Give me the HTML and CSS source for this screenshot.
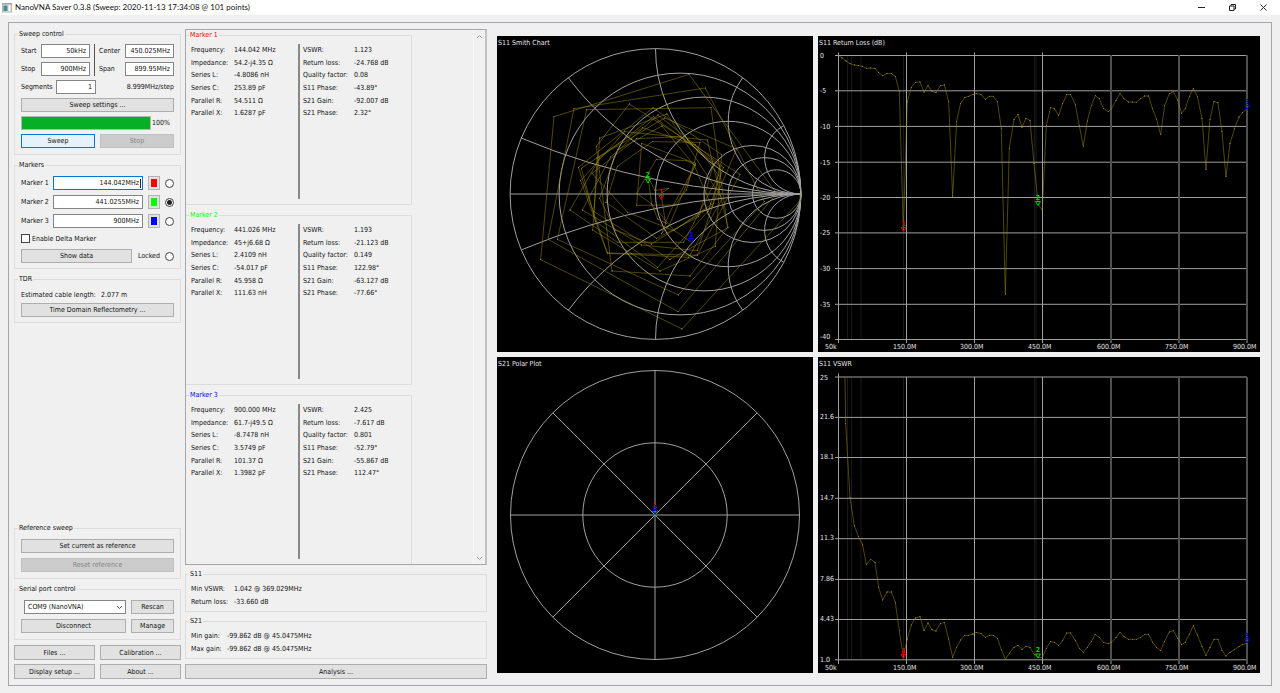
FILE: index.html
```html
<!DOCTYPE html>
<html lang="en">
<head>
<meta charset="utf-8">
<title>NanoVNA Saver 0.3.8</title>
<link rel="stylesheet" href="styles.css">
</head>
<body>
<header class="titlebar">
  <svg class="app-icon" viewBox="0 0 10 10" aria-hidden="true"><defs><linearGradient id="ico" x2="1" y2="1"><stop stop-color="#4a7a9a"/><stop offset="1" stop-color="#3f9a70"/></linearGradient></defs><rect x=".5" y=".5" width="9" height="8.5" fill="#e4e4e4" stroke="#b4b4b4"/><path d="M.5 1h9" stroke="#8c98a0"/><rect x="1.5" y="2.5" width="4" height="5.5" fill="url(#ico)"/><path d="M7.5 3v5" stroke="#fff"/></svg>
  <h1 class="title">NanoVNA Saver 0.3.8 (Sweep: 2020-11-13 17:34:08 @ 101 points)</h1>
  <div class="window-buttons">
    <button class="wbtn" aria-label="Minimize"><svg viewBox="0 0 9 9"><path d="M1 4.5h7"/></svg></button>
    <button class="wbtn" aria-label="Restore"><svg viewBox="0 0 9 9"><path d="M1.500 3h4.500v4.500h-4.500zM3 3V1.500h4.500V6H6"/></svg></button>
    <button class="wbtn" aria-label="Close"><svg viewBox="0 0 9 9"><path d="M1.500 1.500l6 6M7.500 1.500l-6 6"/></svg></button>
  </div>
</header>
<main class="frame">
  <section class="controls">
    <fieldset class="group">
      <legend>Sweep control</legend>
      <div class="rows sweep">
        <div class="range">
          <label for="start">Start</label><input class="field" id="start" value="50kHz">
          <span class="divider"></span>
          <label for="center">Center</label><input class="field" id="center" value="450.025MHz">
          <label for="stop">Stop</label><input class="field" id="stop" value="900MHz">
          <label for="span">Span</label><input class="field" id="span" value="899.95MHz">
        </div>
        <div class="row"><label class="seg-label" for="segments">Segments</label><input class="field seg" id="segments" value="1"><span class="push">8.999MHz/step</span></div>
        <button class="btn">Sweep settings ...</button>
        <div class="row"><div class="progress" role="progressbar" aria-label="Sweep progress" aria-valuenow="100"></div><span class="percent">100%</span></div>
        <div class="pair"><button class="btn active">Sweep</button><button class="btn" disabled>Stop</button></div>
      </div>
    </fieldset>
    <fieldset class="group">
      <legend>Markers</legend>
      <div class="rows markers">
        <div class="mrow"><label for="m1">Marker 1</label><input class="field focused" id="m1" value="144.042MHz"><button class="swatch" aria-label="Marker 1 colour"><i class="chip red"></i></button><input class="radio" type="radio" name="m" aria-label="Select marker 1"></div>
        <div class="mrow"><label for="m2">Marker 2</label><input class="field" id="m2" value="441.0255MHz"><button class="swatch" aria-label="Marker 2 colour"><i class="chip green"></i></button><input class="radio" type="radio" name="m" checked aria-label="Select marker 2"></div>
        <div class="mrow"><label for="m3">Marker 3</label><input class="field" id="m3" value="900MHz"><button class="swatch" aria-label="Marker 3 colour"><i class="chip blue"></i></button><input class="radio" type="radio" name="m" aria-label="Select marker 3"></div>
        <label class="check"><input class="checkbox" type="checkbox">Enable Delta Marker</label>
        <div class="row"><button class="btn show">Show data</button><label class="locked">Locked<input class="radio" type="radio" name="m"></label></div>
      </div>
    </fieldset>
    <fieldset class="group">
      <legend>TDR</legend>
      <div class="rows tdr">
        <p class="cable"><span>Estimated cable length:</span><span>2.077 m</span></p>
        <button class="btn">Time Domain Reflectometry ...</button>
      </div>
    </fieldset>
    <fieldset class="group bottom">
      <legend>Reference sweep</legend>
      <div class="rows loose">
        <button class="btn">Set current as reference</button>
        <button class="btn" disabled>Reset reference</button>
      </div>
    </fieldset>
    <fieldset class="group">
      <legend>Serial port control</legend>
      <div class="rows loose serial">
        <div class="combo"><select class="select" aria-label="Serial port"><option>COM9 (NanoVNA)</option></select><svg viewBox="0 0 7 5"><path d="M1 1l2.500 2.500L6 1"/></svg></div>
        <button class="btn">Rescan</button>
        <button class="btn">Disconnect</button>
        <button class="btn">Manage</button>
      </div>
    </fieldset>
    <div class="pair menu">
      <button class="btn">Files ...</button><button class="btn">Calibration ...</button>
      <button class="btn">Display setup ...</button><button class="btn">About ...</button>
    </div>
  </section>

  <section class="readouts">
    <div class="scroll">
      <div class="marker-list">
        <fieldset class="group marker">
          <legend class="t-red">Marker 1</legend>
          <div class="halves">
            <dl class="values"><dt>Frequency:</dt><dd>144.042 MHz</dd><dt>Impedance:</dt><dd>54.2-j4.35 Ω</dd><dt>Series L:</dt><dd>-4.8086 nH</dd><dt>Series C:</dt><dd>253.89 pF</dd><dt>Parallel R:</dt><dd>54.511 Ω</dd><dt>Parallel X:</dt><dd>1.6287 pF</dd></dl>
            <dl class="values right"><dt>VSWR:</dt><dd>1.123</dd><dt>Return loss:</dt><dd>-24.768 dB</dd><dt>Quality factor:</dt><dd>0.08</dd><dt>S11 Phase:</dt><dd>-43.89°</dd><dt>S21 Gain:</dt><dd>-92.007 dB</dd><dt>S21 Phase:</dt><dd>2.32°</dd></dl>
          </div>
        </fieldset>
        <fieldset class="group marker">
          <legend class="t-green">Marker 2</legend>
          <div class="halves">
            <dl class="values"><dt>Frequency:</dt><dd>441.026 MHz</dd><dt>Impedance:</dt><dd>45+j6.68 Ω</dd><dt>Series L:</dt><dd>2.4109 nH</dd><dt>Series C:</dt><dd>-54.017 pF</dd><dt>Parallel R:</dt><dd>45.958 Ω</dd><dt>Parallel X:</dt><dd>111.63 nH</dd></dl>
            <dl class="values right"><dt>VSWR:</dt><dd>1.193</dd><dt>Return loss:</dt><dd>-21.123 dB</dd><dt>Quality factor:</dt><dd>0.149</dd><dt>S11 Phase:</dt><dd>122.98°</dd><dt>S21 Gain:</dt><dd>-63.127 dB</dd><dt>S21 Phase:</dt><dd>-77.66°</dd></dl>
          </div>
        </fieldset>
        <fieldset class="group marker">
          <legend class="t-blue">Marker 3</legend>
          <div class="halves">
            <dl class="values"><dt>Frequency:</dt><dd>900.000 MHz</dd><dt>Impedance:</dt><dd>61.7-j49.5 Ω</dd><dt>Series L:</dt><dd>-8.7478 nH</dd><dt>Series C:</dt><dd>3.5749 pF</dd><dt>Parallel R:</dt><dd>101.37 Ω</dd><dt>Parallel X:</dt><dd>1.3982 pF</dd></dl>
            <dl class="values right"><dt>VSWR:</dt><dd>2.425</dd><dt>Return loss:</dt><dd>-7.617 dB</dd><dt>Quality factor:</dt><dd>0.801</dd><dt>S11 Phase:</dt><dd>-52.79°</dd><dt>S21 Gain:</dt><dd>-55.867 dB</dd><dt>S21 Phase:</dt><dd>112.47°</dd></dl>
          </div>
        </fieldset>
      </div>
      <div class="scrollbar"><svg viewBox="0 0 7 5"><path d="M1 4l2.500-2.500L6 4"/></svg><svg viewBox="0 0 7 5"><path d="M1 1l2.500 2.500L6 1"/></svg></div>
    </div>
    <fieldset class="group summary">
      <legend>S11</legend>
      <dl class="values"><dt>Min VSWR:</dt><dd>1.042 @ 369.029MHz</dd><dt>Return loss:</dt><dd>-33.660 dB</dd></dl>
    </fieldset>
    <fieldset class="group summary">
      <legend>S21</legend>
      <dl class="values gain"><dt>Min gain:</dt><dd>-99.862 dB @ 45.0475MHz</dd><dt>Max gain:</dt><dd>-99.862 dB @ 45.0475MHz</dd></dl>
    </fieldset>
    <button class="btn analysis">Analysis ...</button>
  </section>

  <section class="charts">
    <svg class="chart" viewBox="497 36 316 316" role="img" aria-label="S11 Smith Chart">
      <defs>
        <marker id="dot" markerUnits="userSpaceOnUse" markerWidth="4" markerHeight="4" refX="2" refY="2"><rect width="4" height="4" fill="#8c7812"/></marker>
      </defs>
      <g class="grid">
        <circle cx="655.500" cy="194" r="145.400"/>
        <circle cx="680" cy="194" r="120.900"/>
        <circle cx="704" cy="194" r="96.900"/>
        <circle cx="728.200" cy="194" r="72.700"/>
        <circle cx="752.400" cy="194" r="48.500"/>
        <circle cx="764.500" cy="194" r="36.400"/>
        <circle cx="776.700" cy="194" r="24.200"/>
        <path d="M510 194H801"/>
        <path d="M655.500 48.600A145.400 145.400 0 0 0 800.900 194M742.700 77.700A72.700 72.700 0 0 0 800.900 194M783.800 125.600A36.350 36.350 0 0 0 800.900 194M568.300 77.700A290.800 290.800 0 0 0 800.900 194M521.300 138.100A727 727 0 0 0 800.900 194"/>
        <path d="M655.500 339.400A145.400 145.400 0 0 1 800.900 194M742.700 310.300A72.700 72.700 0 0 1 800.900 194M783.800 262.400A36.350 36.350 0 0 1 800.900 194M568.300 310.300A290.800 290.800 0 0 1 800.900 194M521.300 249.900A727 727 0 0 1 800.900 194"/>
      </g>
      <g class="trace" transform="translate(495 30) scale(.3333)">
        <polyline points="915,492 915,512 561,897 137,689 177,260 582,133 845,490 549,845 159,628 237,236 631,174 808,515 550,795 187,628 275,239 648,233 698,593 585,738 351,723 304,349 403,222 735,433 607,676 337,669 250,412 474,234 680,374 661,649 495,723 293,600 314,324 516,252 682,506 581,682 337,670 257,452 389,305 637,330 699,593 525,688 297,545 306,384 509,264 725,357 655,520 607,662 440,645 262,540 347,381 489,255 685,412 640,543 488,712 302,574 259,415 443,293 601,345 671,436 566,637 367,637 225,540 314,384 475,260 674,408 653,528 470,642 361,600 314,505 368,360 501,288 598,407 648,524 537,602 398,547 291,430 425,326 556,320 656,400 611,560 485,625 333,517 367,409 472,335 615,337 574,480 540,525 425,526 440,340 602,400 521,590 500,610 513,580 488,567 470,522 425,490 484,388 574,392 602,405 535,525 511,578 498,490 521,475 480,482 459,440 470,522 538,602 588,636"/>
      </g>
      <g class="m-green"><path d="M645.500 179h5l-2.500 4z"/><text x="648" y="177">2</text></g>
      <g class="m-red"><path d="M658.800 195.500h5l-2.500 4z"/><text x="661.300" y="194">1</text></g>
      <g class="m-blue"><path d="M688.800 238.500h5l-2.500 4z"/><text x="691.300" y="237">3</text></g>
      <text class="lbl" x="498" y="45">S11 Smith Chart</text>
    </svg>

    <svg class="chart" viewBox="818 36 442 316" role="img" aria-label="S11 Return Loss">
      <path class="bands" d="M847.500 55v284M851.500 55v284M861 55v284M903.500 55v284M1034.500 55v284M1036 55v284"/>
      <path class="grid" d="M835 55.500H1247M835 90.800H1247M835 126.400H1247M835 162.200H1247M835 197.500H1247M835 232.900H1247M835 268.600H1247M835 304.300H1247M835 339.500H1247M838.500 52.500V343M906.500 52.500V343M974.500 52.500V343M1042.500 52.500V343"/>
      <path class="grid wide" d="M1111 55V343M1179 55V343M1247 55V343"/>
      <g class="trace" transform="translate(815 30) scale(.3333)">
        <polyline points="70,76 81,84 93,93 105,101 118,105 130,107 143,109 154,115 167,114 180,115 191,128 203,137 216,131 229,131 241,139 253,184 265,600 277,215 289,172 301,157 315,156 327,186 339,167 351,184 363,188 376,167 388,165 401,215 413,500 425,274 437,220 449,203 461,199 474,193 485,191 498,193 511,208 523,199 535,199 547,214 559,295 571,793 583,355 597,268 609,254 621,292 633,265 645,271 657,400 670,524 682,541"/>
        <polyline transform="translate(675 0)" points="7,541 19,287 32,232 44,237 56,257 68,221 80,194 92,194 106,223 118,287 130,349 142,273 154,227 166,197 178,206 190,235 205,245 215,235 228,212 240,190 251,205 265,216 277,216 289,217 302,206 314,198 326,198 337,235 350,268 362,314 374,227 388,191 400,185 413,210 425,250 436,235 448,200 460,175 472,199 486,265 498,418 510,268 522,215 534,218 546,305 558,439 570,341 584,295 597,261 608,248 621,236"/>
      </g>
      <g class="m-red"><path d="M901 227.500h5l-2.500 4z"/><text x="903.500" y="226">1</text></g>
      <g class="m-green"><path d="M1035.500 201.500h5l-2.500 4z"/><text x="1038" y="200">2</text></g>
      <g class="m-blue"><path d="M1244.500 105.500h5l-2.500 4z"/><text x="1247" y="104">3</text></g>
      <g class="lbl">
        <text x="819" y="45">S11 Return Loss (dB)</text>
        <text x="820" y="58">0</text><text x="820" y="93">-5</text><text x="820" y="129">-10</text><text x="820" y="165">-15</text><text x="820" y="200">-20</text><text x="820" y="235">-25</text><text x="820" y="271">-30</text><text x="820" y="307">-35</text><text x="820" y="339">-40</text>
        <text x="825" y="349">50k</text><text x="893" y="349">150.0M</text><text x="960" y="349">300.0M</text><text x="1028" y="349">450.0M</text><text x="1097" y="349">600.0M</text><text x="1165" y="349">750.0M</text><text x="1233" y="349">900.0M</text>
      </g>
    </svg>

    <svg class="chart" viewBox="497 357 316 316" role="img" aria-label="S21 Polar Plot">
      <g class="grid">
        <circle cx="655" cy="515" r="144.500"/><circle cx="655" cy="515" r="72.200"/>
        <path d="M510.500 515H799.500M655 370.500V659.500M552.800 412.800L757.200 617.200M757.200 412.800L552.800 617.200"/>
      </g>
      <g class="m-red"><text x="655" y="508">1</text></g>
      <g class="m-green"><path d="M652.500 511.500h5l-2.500 4z"/></g>
      <g class="m-blue"><path d="M652.500 510.500h5l-2.500 4z"/><text x="655" y="510">3</text></g>
      <text class="lbl" x="498" y="366">S21 Polar Plot</text>
    </svg>

    <svg class="chart" viewBox="818 357 442 316" role="img" aria-label="S11 VSWR">
      <path class="bands" d="M847.500 377v282M851.500 377v282M861 377v282M903.500 377v282M1034.500 377v282M1036 377v282"/>
      <path class="grid" d="M835 377H1247M835 417.400H1247M835 457.500H1247M835 498.300H1247M835 538.700H1247M835 579.400H1247M835 619.500H1247M835 659.800H1247M838.500 373.500V664M906.500 377V664M974.500 377V664M1042.500 377V664"/>
      <path class="grid wide" d="M1111 377V664M1179 377V664M1247 377V664"/>
      <g class="trace" transform="translate(815 355) scale(.3333)">
        <polyline points="90,66 92,205 105,427 118,513 130,544 143,570 154,629 167,613 180,622 191,697 203,735 216,711 229,711 241,742 253,827 265,906 277,852 289,810 301,789 315,785 327,827 339,804 351,824 363,828 376,806 388,802 401,852 413,907 425,877 437,855 449,842 461,841 474,837 485,832 498,836 511,847 523,841 535,841 547,850 559,883 571,913 583,895 597,877 609,871 621,883 633,874 645,877 658,899 670,907 682,908"/>
        <polyline transform="translate(675 0)" points="7,908 19,880 32,860 44,862 56,872 68,857 80,834 92,834 106,857 118,880 130,892 142,877 154,859 166,838 178,847 190,862 205,866 215,862 228,848 240,832 252,845 265,853 277,853 289,853 302,847 314,839 326,838 338,862 350,878 362,887 374,859 388,831 400,827 413,850 425,869 436,862 448,838 460,812 472,840 486,874 498,901 510,877 522,853 534,853 546,886 558,903 570,892 584,884 597,875 608,869 621,864"/>
      </g>
      <g class="m-red"><path d="M901 654.500h5l-2.500 4z"/><text x="903.500" y="653">1</text></g>
      <g class="m-green"><path d="M1035.500 654h5l-2.500 4z"/><text x="1038" y="652">2</text></g>
      <g class="m-blue"><path d="M1244.500 639h5l-2.500 4z"/><text x="1247" y="638">3</text></g>
      <g class="lbl">
        <text x="819" y="366">S11 VSWR</text>
        <text x="820" y="380">25</text><text x="820" y="419">21.6</text><text x="820" y="459">18.1</text><text x="820" y="500">14.7</text><text x="820" y="540">11.3</text><text x="820" y="581">7.86</text><text x="820" y="621">4.43</text><text x="820" y="662">1.0</text>
        <text x="825" y="670">50k</text><text x="893" y="670">150.0M</text><text x="960" y="670">300.0M</text><text x="1028" y="670">450.0M</text><text x="1097" y="670">600.0M</text><text x="1165" y="670">750.0M</text><text x="1233" y="670">900.0M</text>
      </g>
    </svg>
  </section>
</main>
</body>
</html>
```
FILE: styles.css
```css
* { box-sizing: border-box; }
body { margin: 0; height: 100vh; display: flex; flex-direction: column; background: #f0f0f0; color: #111; font: 7px/10px "DejaVu Sans Condensed", "Noto Sans", sans-serif; }
button, input, select { font: inherit; color: inherit; margin: 0; padding: 0; min-width: 0; }
dl, dd, p, h1 { margin: 0; }

.titlebar { display: flex; align-items: center; height: 15px; padding-left: 2px; background: #fff; flex: none; }
.app-icon { width: 10px; height: 10px; }
.title { margin-left: 3px; font: 8px/15px Lato, "Noto Sans", sans-serif; }
.window-buttons { margin-left: auto; display: flex; padding-right: 1px; }
.wbtn { width: 31px; height: 15px; border: 0; background: none; display: grid; place-items: center; }
.wbtn svg { width: 9px; height: 9px; fill: none; stroke: #222; stroke-width: 1; }

.frame { flex: 1; min-height: 0; display: flex; margin: 7px 8px; padding: 6px 11px 6px 5px; border: 1px solid #a4a6ae; }
.controls { width: 167px; flex: none; display: flex; flex-direction: column; gap: 5px; }
.readouts { width: 302px; flex: none; margin-left: 4px; display: flex; flex-direction: column; gap: 4px; }
.charts { flex: 1; min-width: 0; margin: 7px 0 6px 10px; display: grid; grid-template: 1fr 1fr / 316fr 442fr; gap: 5px; }

.group { margin: 0; padding: 0 6px; min-width: 0; border: 1px solid #dcdcdc; }
.group legend { margin-left: -3px; padding: 0 1px; height: 10px; line-height: 10px; }
.rows { display: grid; gap: 4px; padding: 5px 0; }
.rows.sweep { padding-bottom: 6px; }
.rows.tdr { gap: 3px; padding-top: 6px; }
.rows.loose { gap: 5px; padding: 6px 0; }
.row { display: flex; align-items: center; }
.push { margin-left: auto; }
.bottom { margin-top: auto; }

.range { display: grid; grid-template-columns: 20px 1fr 9px 26px 1fr; gap: 4px 0; align-items: center; }
.divider { grid-row: 1 / 3; grid-column: 3; justify-self: center; align-self: stretch; width: 1px; background: #555; }
.field { width: 100%; height: 14px; padding: 0 3px; border: 1px solid #858585; background: #fff; text-align: right; }
.focused { border-color: #0078d7; background: #fff linear-gradient(#222, #222) right 1px center / 1px 9px no-repeat; }
.seg-label { width: 35px; }
.seg { width: 40px; }
.btn { height: 14px; border: 1px solid #adadad; background: #e1e1e1; line-height: 10px; }
.btn:disabled { background: #ccc; border-color: #bfbfbf; color: #858585; }
.btn.active { border-color: #0078d7; background: #e5f1fb; }
.progress { flex: 1; height: 14px; border: 1px solid #b0b8b0; background: #06b025; }
.percent { width: 23px; padding-left: 1px; }
.pair { display: grid; grid-template-columns: 1fr 1fr; gap: 4px 5px; }
.menu .btn, .analysis { height: 15px; }
.analysis { margin-top: 1px; }

.rows.markers { gap: 5px; padding-top: 6px; }
.mrow { display: grid; grid-template-columns: 27px 1fr 12px 9px; column-gap: 5px; align-items: center; }
.mrow label { white-space: nowrap; }
.swatch { height: 14px; border: 1px solid #b4b4b4; background: #e1e1e1; display: grid; place-items: center; }
.chip { width: 6px; height: 8px; }
.red { background: #f00; } .green { background: #0f0; } .blue { background: #00f; }
.radio { appearance: none; width: 9px; height: 9px; border: 1px solid #444; border-radius: 50%; background: #fff; }
.radio:checked { background: radial-gradient(circle, #222 0 2px, #fff 3px); }
.check { display: flex; align-items: center; gap: 2px; height: 11px; }
.checkbox { appearance: none; width: 9px; height: 9px; border: 1px solid #444; background: #fff; }
.show { width: 111px; }
.locked { margin-left: auto; display: flex; align-items: center; gap: 5px; }
.cable { display: flex; gap: 5px; }
.serial { grid-template-columns: 1fr 43px; }
.combo { display: grid; margin-left: 3px; }
.combo > * { grid-area: 1 / 1; }
.select { appearance: none; width: 100%; height: 14px; padding: 0 3px; border: 1px solid #858585; border-radius: 0; background: #fff; }
.combo svg { width: 7px; height: 5px; place-self: center end; margin-right: 3px; pointer-events: none; }
.combo path, .scrollbar path { fill: none; stroke: #555; }

.scroll { flex: 1; min-height: 0; display: flex; justify-content: space-between; border: 1px solid #a4a6ae; border-right-width: 2px; border-right-color: #c0c2c8; overflow: hidden; }
.marker-list { width: 226px; display: grid; gap: 5px; align-content: start; }
.marker { height: 175px; padding: 0 5px; border-left: 0; }
.marker legend { margin-left: -2px; }
.halves { display: grid; grid-template-columns: 107px 1fr; height: 159px; padding-top: 4px; }
.values { display: grid; grid-template-columns: 43px 1fr; grid-template-rows: 13px 12px 13px 13px 12px 13px; align-content: start; line-height: 13px; white-space: nowrap; }
.right { grid-template-columns: 51px 1fr; padding-left: 3px; border-left: 2px solid #888; }
.t-red { color: #f00; } .t-green { color: #0f0; } .t-blue { color: #00f; }
.scrollbar { width: 12px; padding: 4px 0 3px; border-left: 1px solid #f8f8f8; display: flex; flex-direction: column; justify-content: space-between; align-items: center; }
.scrollbar svg { width: 7px; height: 5px; }
.scrollbar path { stroke: #a0a0a0; }
.summary { padding: 4px 5px 2px; }
.summary .values { grid-template-rows: 13px 13px; }
.summary legend { margin-left: -2px; }
.gain { grid-template-columns: 36px 1fr; }

.chart { width: 100%; height: 100%; min-height: 0; background: #000; }
.grid { fill: none; stroke: #a0a0a0; stroke-width: 1; }
.wide { stroke: #505050; stroke-width: 2; }
.bands { stroke: #181818; stroke-width: 1; }
.trace polyline { fill: none; stroke: #a08c14; stroke-opacity: .5; stroke-width: 3; marker-mid: url(#dot); }
.lbl { fill: #e4e4e4; font-size: 7px; }
.m-red, .m-green, .m-blue { font-size: 7px; font-weight: bold; text-anchor: middle; }
.m-red path, .m-green path, .m-blue path { fill: none; stroke-width: 1; }
.m-red path { stroke: #e00000; } .m-red text { fill: #e00000; }
.m-green path { stroke: #00d000; } .m-green text { fill: #00d000; }
.m-blue path { stroke: #0000e0; } .m-blue text { fill: #0000e0; }
```
